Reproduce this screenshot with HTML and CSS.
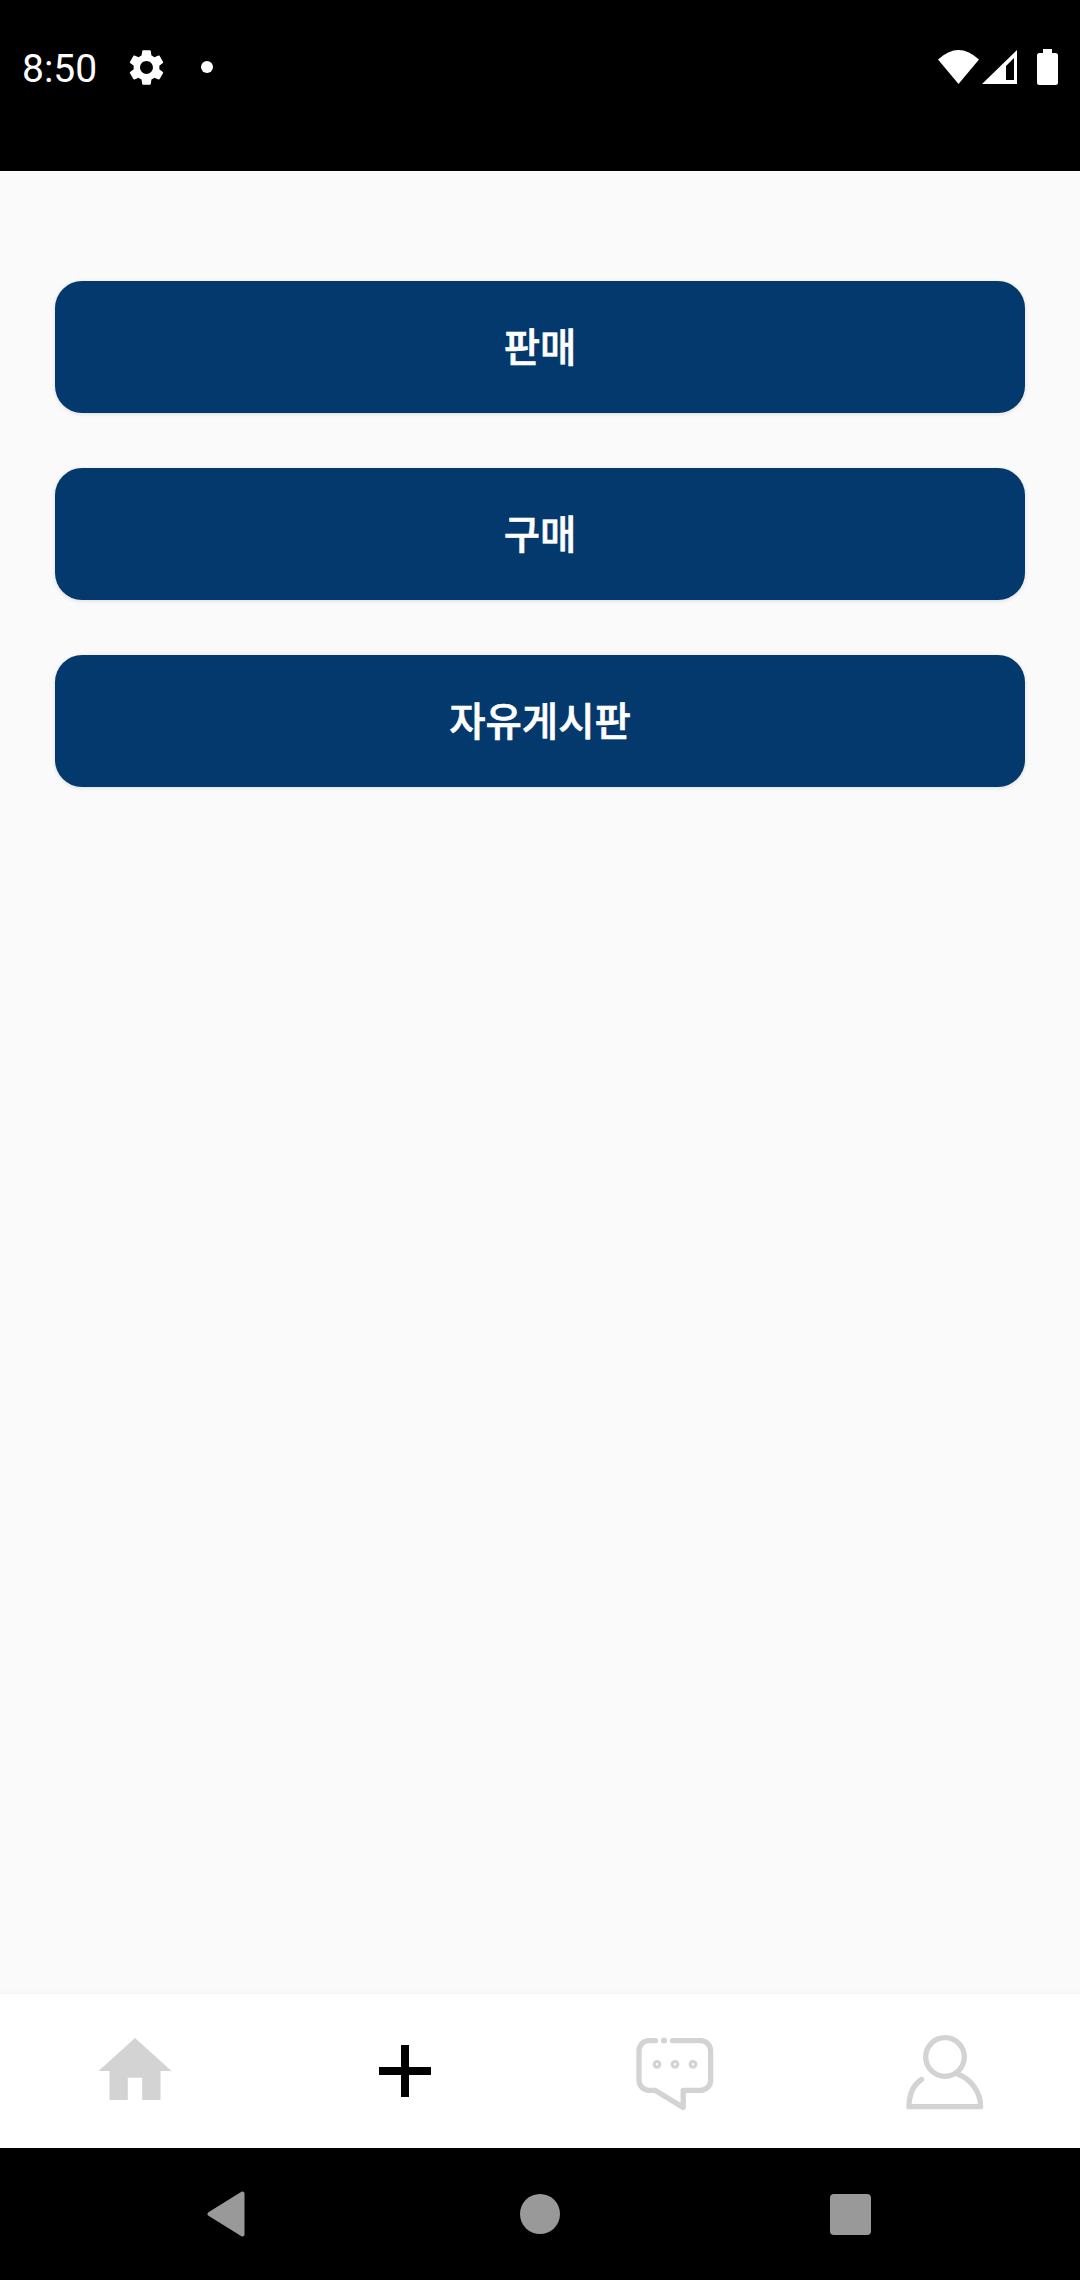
FILE: index.html
```html
<!DOCTYPE html>
<html lang="ko">
<head>
<meta charset="utf-8">
<title>메뉴</title>
<link rel="stylesheet" href="styles.css">
</head>
<body>
<div class="screen">
  <header class="statusbar">
    <div class="status-row">
      <div class="status-left">
        <span class="clock">8:50</span>
        <svg class="gear" width="43" height="43" viewBox="0 0 24 24"><path fill="#fff" d="M19.14,12.94c0.04-0.3,0.06-0.61,0.06-0.94c0-0.32-0.02-0.64-0.07-0.94l2.03-1.58c0.18-0.14,0.23-0.41,0.12-0.61l-1.92-3.32c-0.12-0.22-0.37-0.29-0.59-0.22l-2.39,0.96c-0.5-0.38-1.03-0.7-1.62-0.94L14.4,2.81c-0.04-0.24-0.24-0.41-0.48-0.41h-3.84c-0.24,0-0.43,0.17-0.47,0.41L9.25,5.35C8.66,5.59,8.12,5.92,7.63,6.29L5.24,5.33c-0.22-0.08-0.47,0-0.59,0.22L2.74,8.87C2.62,9.08,2.66,9.34,2.86,9.48l2.03,1.58C4.84,11.36,4.8,11.69,4.8,12s0.02,0.64,0.07,0.94l-2.03,1.58c-0.18,0.14-0.23,0.41-0.12,0.61l1.92,3.32c0.12,0.22,0.37,0.29,0.59,0.22l2.39-0.96c0.5,0.38,1.03,0.7,1.62,0.94l0.36,2.54c0.05,0.24,0.24,0.41,0.48,0.41h3.84c0.24,0,0.44-0.17,0.47-0.41l0.36-2.54c0.59-0.24,1.13-0.56,1.62-0.94l2.39,0.96c0.22,0.08,0.47,0,0.59-0.22l1.92-3.32c0.12-0.22,0.07-0.47-0.12-0.61L19.14,12.94z M12,15.6c-1.98,0-3.6-1.62-3.6-3.6s1.62-3.6,3.6-3.6s3.6,1.62,3.6,3.6S13.98,15.6,12,15.6z"/></svg>
        <span class="notif-dot"></span>
      </div>
      <div class="status-right">
        <svg class="wifi" width="41" height="34" viewBox="0 0 41 34"><path fill="#fff" d="M0 9.5Q20.5-9.5 41 9.5L20.5 34Z"/></svg>
        <svg class="signal" width="35" height="34" viewBox="0 0 35 34"><path fill="#fff" fill-rule="evenodd" d="M0 34L35 0V34ZM32 8L24 16V30H32Z"/></svg>
        <svg class="battery" width="21" height="36" viewBox="0 0 21 36"><path fill="#fff" d="M6 0H15V4H18.5A2.5 2.5 0 0 1 21 6.500V33.500A2.500 2.500 0 0 1 18.500 36H2.500A2.500 2.500 0 0 1 0 33.500V6.500A2.500 2.500 0 0 1 2.500 4H6Z"/></svg>
      </div>
    </div>
  </header>

  <main class="menu">
    <button class="menu-btn" type="button">판매</button>
    <button class="menu-btn" type="button">구매</button>
    <button class="menu-btn" type="button">자유게시판</button>
  </main>

  <nav class="tabbar">
    <a class="tab">
      <svg width="80" height="80" viewBox="0 0 80 80"><path fill="#d3d3d3" d="M40 7L76.500 40H65.500V69H47.200V46.700H32.800V69H14.500V40H3.500Z"/></svg>
    </a>
    <a class="tab">
      <svg width="80" height="80" viewBox="0 0 80 80"><path fill="#000" d="M36 14H44V36H66V44H44V66H36V44H14V36H36Z"/></svg>
    </a>
    <a class="tab">
      <svg width="80" height="80" viewBox="0 0 80 80" fill="none" stroke="#d3d3d3" stroke-width="5.300" stroke-linecap="round" stroke-linejoin="round">
        <path d="M20.500 9.600H14A10 10 0 0 0 4 19.600V49.400A10 10 0 0 0 14 59.400H20.400L48.200 76.400V59.400H65.600A10 10 0 0 0 75.600 49.400V19.600A10 10 0 0 0 65.600 9.600H37.500"/>
        <circle class="chat-dot" cx="29" cy="9.600" r="3"/>
        <g class="chat-rings">
          <circle cx="22" cy="33.300" r="2.800"/>
          <circle cx="40" cy="33.300" r="2.800"/>
          <circle cx="58" cy="33.300" r="2.800"/>
        </g>
      </svg>
    </a>
    <a class="tab">
      <svg width="80" height="80" viewBox="0 0 80 80" fill="none" stroke="#d3d3d3" stroke-width="5.300" stroke-linecap="round" stroke-linejoin="round">
        <circle cx="40" cy="26" r="19.300"/>
        <path d="M16.500 48.500C8.500 54 4 64 4 75.700H75.600C75.600 61 66 48 52.500 43"/>
      </svg>
    </a>
  </nav>

  <footer class="navbar">
    <svg class="nav-back" width="38" height="46" viewBox="0 0 38 46"><path fill="#999" stroke="#999" stroke-width="4" stroke-linejoin="round" d="M35.500 2.500V43.500L2.500 23Z"/></svg>
    <span class="nav-home"></span>
    <span class="nav-recent"></span>
  </footer>
</div>
</body>
</html>
```

FILE: styles.css
```css
html, body {
  margin: 0;
  padding: 0;
}

.screen {
  width: 1080px;
  height: 2280px;
  display: flex;
  flex-direction: column;
  background: #fafafa;
  font-family: "Noto Sans CJK KR", "Noto Sans", sans-serif;
  overflow: hidden;
}

.statusbar {
  height: 171px;
  flex: none;
  background: #000;
  color: #fff;
}

.status-row {
  height: 134px;
  display: flex;
  align-items: center;
  justify-content: space-between;
  padding: 0 22px;
}

.status-left,
.status-right {
  display: flex;
  align-items: center;
}

.clock {
  font-family: Roboto, sans-serif;
  font-size: 39px;
  font-weight: 400;
  line-height: 44px;
  width: 103px;
  padding-top: 4px;
}

.gear {
  display: block;
}

.notif-dot {
  width: 12px;
  height: 12px;
  margin-left: 33px;
  border-radius: 50%;
  background: #fff;
}

.status-right svg {
  display: block;
}

.signal {
  margin-left: 3px;
}

.battery {
  margin-left: 20px;
}

.menu {
  flex: 1;
  display: flex;
  flex-direction: column;
  gap: 55px;
  padding: 110px 55px 0;
}

.menu-btn {
  height: 132px;
  flex: none;
  border: 0;
  padding: 0 0 6px;
  border-radius: 27px;
  background: #03396c;
  color: #fff;
  font-family: inherit;
  font-size: 39.500px;
  font-weight: 500;
  -webkit-text-stroke: 0.6px #fff;
  box-shadow: 0 1px 4px rgba(0, 0, 0, 0.12);
}

.chat-dot {
  fill: #d3d3d3;
  stroke: none;
}

.chat-rings circle {
  fill: #fff;
  stroke-width: 3.200px;
}

.tabbar {
  height: 154px;
  flex: none;
  display: flex;
  background: #fff;
  box-shadow: 0 -1px 5px rgba(0, 0, 0, 0.04);
  position: relative;
}

.tab {
  flex: 1;
  display: flex;
  align-items: center;
  justify-content: center;
}

.tab svg {
  display: block;
}

.navbar {
  height: 132px;
  flex: none;
  display: flex;
  align-items: center;
  background: #000;
}

.nav-back {
  display: block;
  margin-left: 207px;
}

.nav-home {
  width: 40px;
  height: 40px;
  margin-left: 275px;
  border-radius: 50%;
  background: #999;
}

.nav-recent {
  width: 41px;
  height: 41px;
  margin-left: 270px;
  border-radius: 4px;
  background: #999;
}
```
